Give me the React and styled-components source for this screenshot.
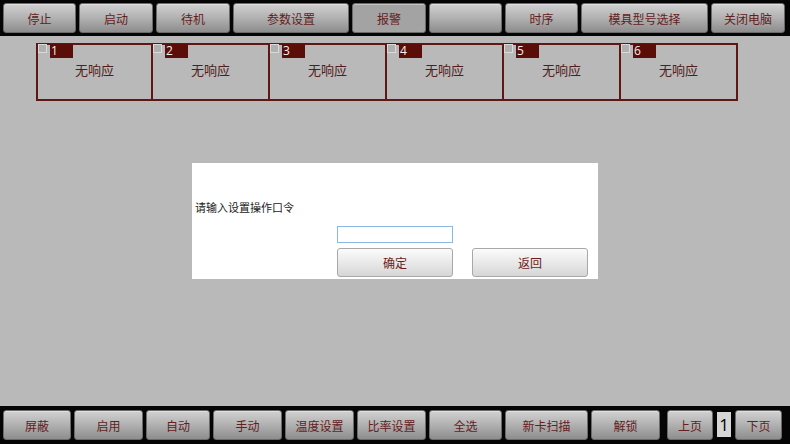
import React from "react";
import styled, { createGlobalStyle } from "styled-components";

const GlobalStyle = createGlobalStyle`
  html, body {
    margin: 0;
    padding: 0;
    background: #b9b9b9;
  }
  * {
    box-sizing: border-box;
  }
`;

const topButtons = [
  { label: "停止", width: 73 },
  { label: "启动", width: 74 },
  { label: "待机", width: 74 },
  { label: "参数设置", width: 116 },
  { label: "报警", width: 74, active: true },
  { label: "", width: 73 },
  { label: "时序", width: 73 },
  { label: "模具型号选择", width: 127 },
  { label: "关闭电脑", width: 74 },
];

const bottomButtons = [
  { label: "屏蔽", width: 68 },
  { label: "启用", width: 69 },
  { label: "自动", width: 64 },
  { label: "手动", width: 69 },
  { label: "温度设置", width: 69 },
  { label: "比率设置", width: 69 },
  { label: "全选", width: 73 },
  { label: "新卡扫描", width: 83 },
  { label: "解锁", width: 69 },
];

const cards = [1, 2, 3, 4, 5, 6];

function App() {
  return (
    <Page>
      <GlobalStyle />
      <TopBar>
        {topButtons.map((b, i) => (
          <BarButton key={i} $width={b.width} $active={b.active}>
            {b.label}
          </BarButton>
        ))}
      </TopBar>

      <Main>
        <CardRow>
          {cards.map((n) => (
            <Card key={n}>
              <CardHead>
                <Check />
                <CardNo>{n}</CardNo>
              </CardHead>
              <CardText>无响应</CardText>
            </Card>
          ))}
        </CardRow>

        <Dialog>
          <Prompt>请输入设置操作口令</Prompt>
          <DialogBody>
            <Input type="password" />
            <DialogActions>
              <DialogButton>确定</DialogButton>
              <DialogButton>返回</DialogButton>
            </DialogActions>
          </DialogBody>
        </Dialog>
      </Main>

      <BottomBar>
        {bottomButtons.map((b, i) => (
          <BarButton key={i} $width={b.width}>
            {b.label}
          </BarButton>
        ))}
        <Pager>
          <BarButton $width={46}>上页</BarButton>
          <PageNo>1</PageNo>
          <BarButton $width={47}>下页</BarButton>
        </Pager>
      </BottomBar>
    </Page>
  );
}

const Page = styled.div`
  width: 790px;
  height: 444px;
  display: flex;
  flex-direction: column;
  background: #b9b9b9;
  font-family: "Noto Sans CJK SC", "Noto Sans", sans-serif;
  overflow: hidden;
`;

const TopBar = styled.div`
  height: 36px;
  background: #050505;
  display: flex;
  align-items: flex-start;
  gap: 3px;
  padding: 3px 0 0 3px;
`;

const BottomBar = styled.div`
  height: 38px;
  background: #050505;
  display: flex;
  align-items: flex-start;
  gap: 3px;
  padding: 4px 0 0 3px;
`;

const BarButton = styled.div`
  width: ${(p) => p.$width}px;
  height: 30px;
  flex: none;
  border-radius: 3px;
  border: 1px solid #6a6a6a;
  box-shadow: inset 0 1px 0 rgba(255, 255, 255, 0.35);
  background: ${(p) =>
    p.$active
      ? "#a3a3a3"
      : "linear-gradient(#d1d1d1 0%, #b4b4b4 45%, #8d8d8d 100%)"};
  color: #64201d;
  font-size: 12px;
  display: flex;
  align-items: center;
  justify-content: center;
`;

const Pager = styled.div`
  display: flex;
  align-items: flex-start;
  gap: 4px;
  margin-left: 4px;
`;

const PageNo = styled.div`
  width: 14px;
  height: 25px;
  margin-top: 2px;
  background: #d6d6d6;
  color: #000;
  font-family: "Open Sans", sans-serif;
  font-size: 17px;
  display: flex;
  align-items: center;
  justify-content: center;
`;

const Main = styled.div`
  flex: 1;
  position: relative;
  padding: 7px 0 0 36px;
`;

const CardRow = styled.div`
  display: flex;
`;

const Card = styled.div`
  width: 117px;
  height: 58px;
  border: 2px solid #5e1712;
  border-left-width: 0;
  display: flex;
  flex-direction: column;

  &:first-child {
    border-left-width: 2px;
  }
`;

const CardHead = styled.div`
  display: flex;
  align-items: flex-start;
  gap: 3px;
  margin-top: -1px;
`;

const Check = styled.div`
  width: 9px;
  height: 9px;
  border: 1px solid #dadada;
  background: #b0b0b0;
`;

const CardNo = styled.div`
  width: 23px;
  height: 14px;
  background: #5b0d08;
  color: #f2f2f2;
  font-family: "Open Sans", sans-serif;
  font-size: 12px;
  line-height: 14px;
  padding-left: 1px;
`;

const CardText = styled.div`
  flex: 1;
  display: flex;
  align-items: center;
  justify-content: center;
  padding-bottom: 18px;
  color: #521d1a;
  font-size: 13px;
`;

const Dialog = styled.div`
  position: absolute;
  left: 192px;
  top: 127px;
  width: 406px;
  height: 116px;
  background: #ffffff;
  padding: 36px 0 0 3px;
`;

const Prompt = styled.div`
  font-size: 11px;
  line-height: 16px;
  color: #222;
`;

const DialogBody = styled.div`
  margin: 11px 0 0 142px;
  display: flex;
  flex-direction: column;
  gap: 5px;
`;

const Input = styled.input`
  width: 116px;
  height: 17px;
  margin: 0;
  border: 1px solid #8ab8e6;
  outline: none;
  background: #fff;
`;

const DialogActions = styled.div`
  display: flex;
  gap: 19px;
`;

const DialogButton = styled.div`
  width: 116px;
  height: 29px;
  border: 1px solid #a8a8a8;
  border-radius: 3px;
  background: linear-gradient(#fbfbfb, #e9e9e9 50%, #d6d6d6);
  color: #6b1d1a;
  font-size: 12px;
  display: flex;
  align-items: center;
  justify-content: center;
`;

export default App;
